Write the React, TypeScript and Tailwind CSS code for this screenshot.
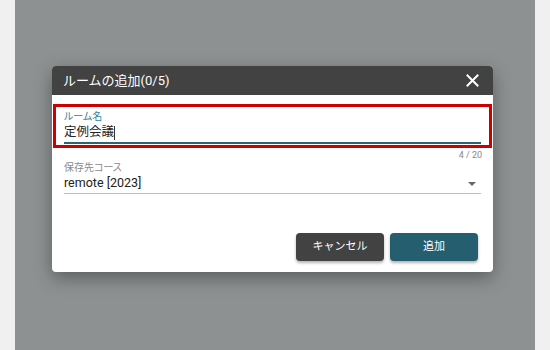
import React from 'react';

const font = { fontFamily: 'Roboto, "Noto Sans CJK JP", sans-serif' };

const CloseIcon = () => (
  <svg width="13" height="13" viewBox="0 0 13 13" fill="none" stroke="white" strokeWidth="2" strokeLinecap="square">
    <path d="M1.5 1.5 L11.5 11.5 M11.5 1.5 L1.5 11.5" />
  </svg>
);

const App: React.FC = () => {
  return (
    <div className="w-[550px] h-[350px] flex bg-[#f0f0f0] px-[15px]" style={font}>
      <div className="flex-1 bg-[#8e9191] pt-[66px] pl-[37px]">
        <div className="w-[441px] h-[206px] bg-white rounded-[4px] shadow-[0_6px_18px_rgba(0,0,0,0.35)] overflow-hidden flex flex-col">
          {/* header */}
          <div className="h-[29px] bg-[#424242] flex items-center justify-between pl-[11px] pr-[14px]">
            <span className="text-white text-[13px] leading-none">ルームの追加(0/5)</span>
            <CloseIcon />
          </div>

          <div className="flex flex-col px-[1px] pt-[9px]">
            <div className="border-[3px] border-[#cc0000] h-[44px] px-[8px] pt-[4px]">
              <div className="text-[10px] leading-[12px] text-[#3a8099] [font-feature-settings:'palt']">ルーム名</div>
              <div className="border-b-2 border-[#2c6474] h-[21px] flex items-center text-[12.5px] text-[#222]">
                定例会議<span className="inline-block w-px h-[14px] bg-[#333]" />
              </div>
            </div>
            <div className="text-right pr-[10px] text-[9px] leading-[12px] text-[#888] mt-[1px]">4 / 20</div>

            <div className="px-[11px] mt-[1px]">
              <div className="text-[10px] leading-[12px] text-[#8a8a8a] [font-feature-settings:'palt']">保存先コース</div>
              <div className="border-b border-[#bdbdbd] h-[20px] flex items-center justify-between text-[12.5px] text-[#222]">
                <span>remote [2023]</span>
                <span className="w-0 h-0 border-l-[4px] border-r-[4px] border-t-[4px] border-l-transparent border-r-transparent border-t-[#666] mr-[5px]" />
              </div>
            </div>
          </div>

          <div className="flex justify-end gap-[6px] pr-[15px] mt-auto mb-[11px]">
            <button className="w-[88px] h-[28px] rounded-[4px] bg-[#424242] text-white text-[11px] shadow-[0_2px_3px_rgba(0,0,0,0.3)]">
              キャンセル
            </button>
            <button className="w-[88px] h-[28px] rounded-[4px] bg-[#255e6e] text-white text-[11px] shadow-[0_2px_3px_rgba(0,0,0,0.3)]">
              追加
            </button>
          </div>
        </div>
      </div>
    </div>
  );
};

export default App;
